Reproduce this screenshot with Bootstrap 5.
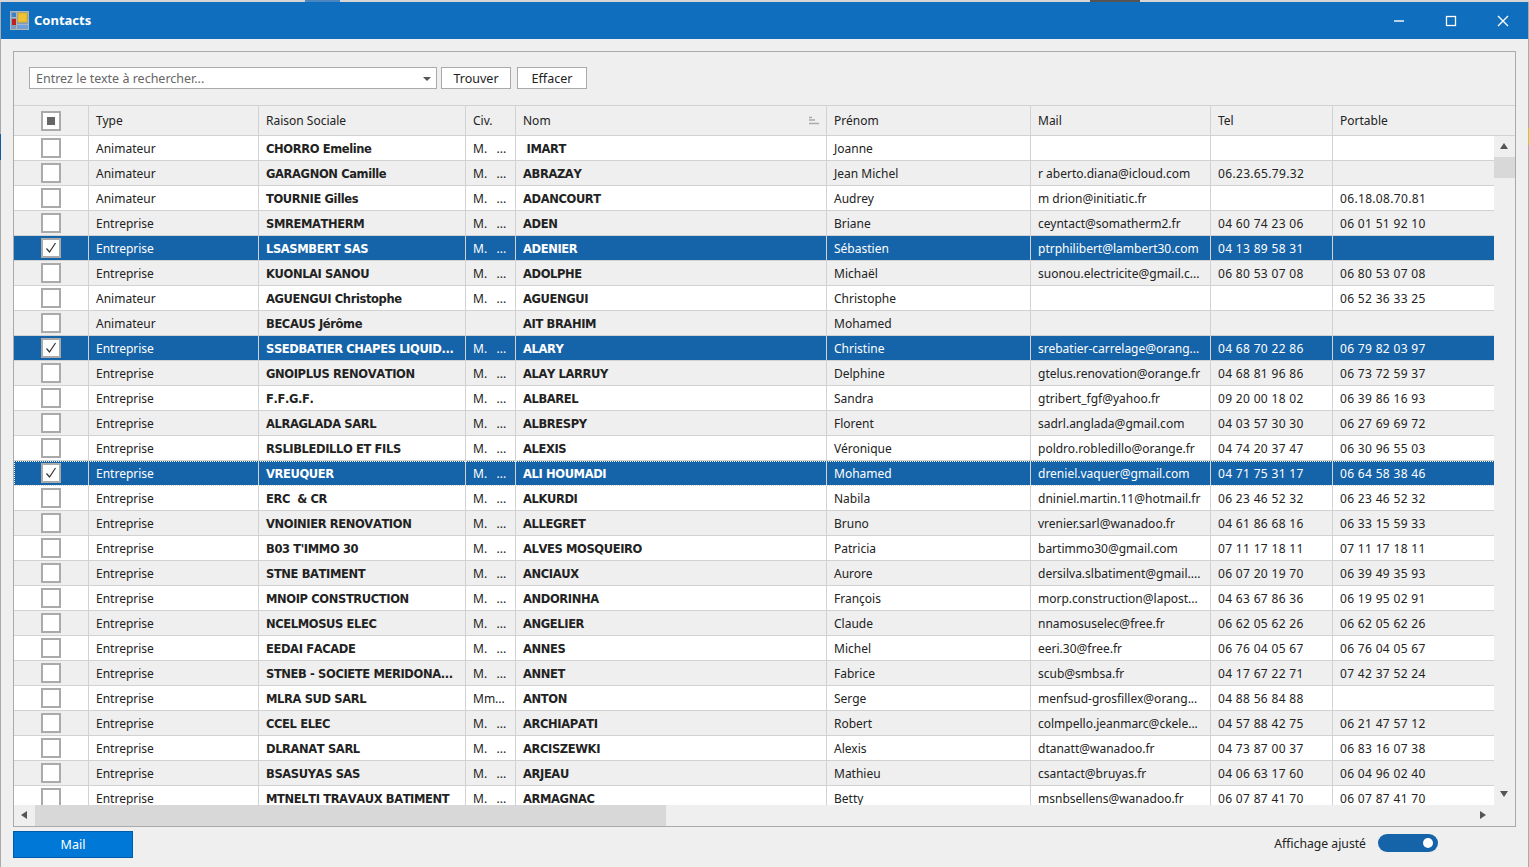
<!DOCTYPE html>
<html lang="fr">
  <head>
    <meta charset="UTF-8" />
    <meta name="viewport" content="width=device-width, initial-scale=1.0" />
    <title>Contacts</title>
    <link
      rel="stylesheet"
      href="https://cdn.jsdelivr.net/npm/bootstrap@5.3.3/dist/css/bootstrap.min.css"
    />
    <style>
      html, body { height: 100%; overflow: hidden; }
      body {
        font-family: "Noto Sans", sans-serif;
        font-size: 12px;
        color: #222;
        background: #efefef;
      }
      /* what shows of the application behind the window */
      .behind-strip {
        height: 2px;
        background: linear-gradient(90deg, #d6d6d6 305px, #4a86c0 305px, #4a86c0 340px, #d6d6d6 340px, #d6d6d6 1090px, #555 1090px, #555 1140px, #d6d6d6 1140px);
      }
      .behind-left { position: absolute; left: 0; top: 134px; width: 1px; height: 26px; background: #0f5c9e; }
      .behind-right { position: absolute; right: 0; top: 128px; width: 1px; height: 17px; background: #c8c820; }
      .win {
        height: 865px;
        background: #efefef;
        border-left: 1px solid #aaa;
        border-right: 1px solid #aaa;
      }
      .win-title { height: 37px; background: #106ebe; color: #fff; padding-left: 9px; }
      .win-title-text { font-weight: 700; font-size: 13px; margin-left: 5px; }
      .win-btns { margin-left: auto; margin-right: -1px; }
      .win-btn { width: 52px; height: 37px; }
      .group-box {
        margin: 12px 12px 0 12px;
        border: 1px solid #aaa;
        height: 776px;
      }
      .search-bar { height: 53px; padding: 15px 0 0 15px; }
      .search-combo {
        width: 408px; height: 22px;
        background: #fff; border: 1px solid #aaa;
        padding: 2px 6px 0; color: #666; font-size: 12.5px;
      }
      .caret-down {
        margin-left: auto; margin-right: -1px;
        border-left: 4px solid transparent; border-right: 4px solid transparent;
        border-top: 4px solid #555;
      }
      .flat-btn {
        width: 70px; height: 22px; padding: 1px 0 0;
        background: #fff; border: 1px solid #aaa; border-radius: 0;
        color: #222; font-size: 12.5px; line-height: 20px;
      }
      .flat-btn + .flat-btn { margin-left: 6px; }
      .grid-area { height: 721px; position: relative; overflow: hidden; }
      .grid-clip { height: 700px; overflow: hidden; }
      .contact-grid {
        table-layout: fixed; width: 1501px; margin: 0;
        --bs-table-bg: transparent; border-collapse: separate; border-spacing: 0;
      }
      .contact-grid th, .contact-grid td {
        padding: 0 7px;
        font-weight: 400; font-size: 12px;
        white-space: nowrap; overflow: hidden;
        vertical-align: middle;
        border: 0;
        border-right: 1px solid #d2d2d2;
        border-bottom: 1px solid #d2d2d2;
        color: #222;
      }
      .contact-grid th { height: 31px; background: #efefef; border-top: 1px solid #d2d2d2; line-height: 15px; padding-bottom: 1px; }
      .contact-grid th:last-child { border-right: 0; }
      .contact-grid td { height: 25px; line-height: 15px; padding-top: 1px; }
      .contact-grid tbody tr:nth-child(odd) td { background: #fff; }
      .contact-grid tbody tr:nth-child(even) td { background: #efefef; }
      .contact-grid tbody tr.sel td { background: #1563a8; color: #fff; }
      .contact-grid td.name-cell {
        font-family: "DejaVu Sans", sans-serif; font-weight: 700; font-size: 11.5px;
        letter-spacing: -.38px; font-kerning: none; padding-top: 3px;
      }
      .contact-grid td.phone-cell { letter-spacing: .33px; }
      .contact-grid td.cb-cell, .contact-grid th.cb-cell { padding: 0; text-align: center; }
      .contact-grid tr.focus-row { outline: 1px dotted #fff; outline-offset: -1px; }
      .tick-box {
        display: inline-flex; align-items: center; justify-content: center;
        width: 20px; height: 20px;
        background: #fff; border: 2px solid #aaa; vertical-align: middle;
      }
      .tick-mixed { width: 8px; height: 8px; background: #666; }
      .sort-mark { position: absolute; top: 11px; left: 795px; }
      .vscroll { position: absolute; top: 31px; right: 0; width: 21px; height: 669px; background: #efefef; }
      .vscroll-thumb { position: absolute; top: 21px; left: 0; width: 21px; height: 21px; background: #d8d8d8; }
      .arr { position: absolute; width: 0; height: 0; }
      .arr-up { left: 6px; top: 7px; border: 4.5px solid transparent; border-top: 0; border-bottom: 6px solid #555; }
      .arr-down { left: 6px; bottom: 8px; border: 4.5px solid transparent; border-bottom: 0; border-top: 6px solid #555; }
      .hscroll { height: 21px; background: #efefef; position: relative; }
      .hscroll-thumb { position: absolute; left: 21px; top: 0; width: 631px; height: 21px; background: #d8d8d8; }
      .arr-left { left: 7px; top: 6px; border: 4.5px solid transparent; border-left: 0; border-right: 6px solid #555; }
      .arr-right { left: 1466px; top: 6px; border: 4.5px solid transparent; border-right: 0; border-left: 6px solid #555; }
      .win-foot { padding: 4px 90px 0 12px; }
      .mail-btn {
        width: 120px; height: 27px; padding: 1px 0 0;
        background: #0078d7; border: 1px solid #005ca8; border-radius: 0;
        color: #fff; font-size: 12.5px;
      }
      .adjust-wrap { padding-top: 2px; }
      .adjust-label { font-size: 12.2px; margin-right: 12px; padding-top: 2px; }
      .adjust-toggle {
        width: 60px; height: 18px; border-radius: 9px; background: #1563a8;
        padding-right: 5px;
      }
      .adjust-knob { width: 10px; height: 10px; border-radius: 50%; background: #fff; }
    </style>
  </head>
  <body>
    <div class="behind-strip"></div>
    <div class="win d-flex flex-column">
      <div class="win-title d-flex align-items-center">
        <svg width="19" height="19" viewBox="0 0 19 19">
          <rect x="0.5" y="0.5" width="18" height="18" fill="#7f9cbc" stroke="#aab6c2" />
          <path d="M6.5 1v17M1 6.5h6M7 13.5h11" stroke="#aab6c2" fill="none" />
          <rect x="2" y="2" width="4" height="4" fill="#3f7fc4" />
          <rect x="8" y="2" width="9" height="9" fill="#f1c232" stroke="#d9ad2c" />
          <rect x="2" y="8" width="4" height="6" fill="#c0201c" />
          <rect x="9" y="14" width="7" height="3" fill="#6aa0e8" />
        </svg>
        <span class="win-title-text">Contacts</span>
        <div class="win-btns d-flex">
          <div class="win-btn d-flex align-items-center justify-content-center">
            <svg width="12" height="12" viewBox="0 0 12 12"><path d="M1 6h10" stroke="#fff" stroke-width="1.4" fill="none" /></svg>
          </div>
          <div class="win-btn d-flex align-items-center justify-content-center">
            <svg width="12" height="12" viewBox="0 0 12 12"><rect x="1.5" y="1.5" width="9" height="9" stroke="#fff" stroke-width="1.3" fill="none" /></svg>
          </div>
          <div class="win-btn d-flex align-items-center justify-content-center">
            <svg width="12" height="12" viewBox="0 0 12 12"><path d="M1 1l10 10M11 1L1 11" stroke="#fff" stroke-width="1.4" fill="none" /></svg>
          </div>
        </div>
      </div>

      <div class="group-box">
        <div class="search-bar d-flex align-items-start">
          <div class="search-combo d-flex align-items-center">
            <span>Entrez le texte à rechercher...</span>
            <span class="caret-down"></span>
          </div>
          <button class="btn flat-btn ms-1">Trouver</button>
          <button class="btn flat-btn">Effacer</button>
        </div>
        <div class="grid-area">
          <div class="grid-clip">
            <table class="table contact-grid">
              <colgroup>
                <col style="width: 75px" /><col style="width: 170px" /><col style="width: 207px" />
                <col style="width: 50px" /><col style="width: 311px" /><col style="width: 204px" />
                <col style="width: 180px" /><col style="width: 122px" /><col />
              </colgroup>
              <thead>
                <tr>
                  <th class="cb-cell"><span class="tick-box"><span class="tick-mixed"></span></span></th>
                  <th>Type</th><th>Raison Sociale</th><th>Civ.</th><th>Nom</th>
                  <th>Prénom</th><th>Mail</th><th>Tel</th><th>Portable</th>
                </tr>
              </thead>
              <tbody id="rows"></tbody>
            </table>
          </div>
          <svg class="sort-mark" width="10" height="9" viewBox="0 0 10 9">
            <path d="M0 1.5h3M0 4h6M0 7.5h10" stroke="#aaa" stroke-width="1.4" fill="none" />
          </svg>
          <div class="vscroll">
            <span class="arr arr-up"></span>
            <div class="vscroll-thumb"></div>
            <span class="arr arr-down"></span>
          </div>
          <div class="hscroll">
            <span class="arr arr-left"></span>
            <div class="hscroll-thumb"></div>
            <span class="arr arr-right"></span>
          </div>
        </div>
      </div>

      <div class="win-foot d-flex align-items-start">
        <button class="btn mail-btn">Mail</button>
        <div class="ms-auto d-flex align-items-center adjust-wrap">
          <span class="adjust-label">Affichage ajusté</span>
          <div class="adjust-toggle d-flex align-items-center justify-content-end">
            <span class="adjust-knob"></span>
          </div>
        </div>
      </div>
    </div>
    <span class="behind-left"></span>
    <span class="behind-right"></span>

    <script>
      // type, raison sociale, civ, nom, prenom, mail, tel, portable, etat
      var E = "Entreprise", A = "Animateur", M = "M.\u00a0\u00a0\u00a0...";
      var contacts = [
        [A, "CHORRO Emeline", M, "\u00a0IMART", "Joanne", "", "", ""],
        [A, "GARAGNON Camille", M, "ABRAZAY", "Jean Michel", "r aberto.diana@icloud.com", "06.23.65.79.32", ""],
        [A, "TOURNIE Gilles", M, "ADANCOURT", "Audrey", "m drion@initiatic.fr", "", "06.18.08.70.81"],
        [E, "SMREMATHERM", M, "ADEN", "Briane", "ceyntact@somatherm2.fr", "04 60 74 23 06", "06 01 51 92 10"],
        [E, "LSASMBERT SAS", M, "ADENIER", "Sébastien", "ptrphilibert@lambert30.com", "04 13 89 58 31", "", "sel"],
        [E, "KUONLAI SANOU", M, "ADOLPHE", "Michaël", "suonou.electricite@gmail.c...", "06 80 53 07 08", "06 80 53 07 08"],
        [A, "AGUENGUI Christophe", M, "AGUENGUI", "Christophe", "", "", "06 52 36 33 25"],
        [A, "BECAUS Jérôme", "", "AIT BRAHIM", "Mohamed", "", "", ""],
        [E, "SSEDBATIER CHAPES LIQUID...", M, "ALARY", "Christine", "srebatier-carrelage@orang...", "04 68 70 22 86", "06 79 82 03 97", "sel"],
        [E, "GNOIPLUS RENOVATION", M, "ALAY LARRUY", "Delphine", "gtelus.renovation@orange.fr", "04 68 81 96 86", "06 73 72 59 37"],
        [E, "F.F.G.F.", M, "ALBAREL", "Sandra", "gtribert_fgf@yahoo.fr", "09 20 00 18 02", "06 39 86 16 93"],
        [E, "ALRAGLADA SARL", M, "ALBRESPY", "Florent", "sadrl.anglada@gmail.com", "04 03 57 30 30", "06 27 69 69 72"],
        [E, "RSLIBLEDILLO ET FILS", M, "ALEXIS", "Véronique", "poldro.robledillo@orange.fr", "04 74 20 37 47", "06 30 96 55 03"],
        [E, "VREUQUER", M, "ALI HOUMADI", "Mohamed", "dreniel.vaquer@gmail.com", "04 71 75 31 17", "06 64 58 38 46", "sel focus-row"],
        [E, "ERC\u00a0 & CR", M, "ALKURDI", "Nabila", "dniniel.martin.11@hotmail.fr", "06 23 46 52 32", "06 23 46 52 32"],
        [E, "VNOINIER RENOVATION", M, "ALLEGRET", "Bruno", "vrenier.sarl@wanadoo.fr", "04 61 86 68 16", "06 33 15 59 33"],
        [E, "B03 T'IMMO 30", M, "ALVES MOSQUEIRO", "Patricia", "bartimmo30@gmail.com", "07 11 17 18 11", "07 11 17 18 11"],
        [E, "STNE BATIMENT", M, "ANCIAUX", "Aurore", "dersilva.slbatiment@gmail....", "06 07 20 19 70", "06 39 49 35 93"],
        [E, "MNOIP CONSTRUCTION", M, "ANDORINHA", "François", "morp.construction@lapost...", "04 63 67 86 36", "06 19 95 02 91"],
        [E, "NCELMOSUS ELEC", M, "ANGELIER", "Claude", "nnamosuselec@free.fr", "06 62 05 62 26", "06 62 05 62 26"],
        [E, "EEDAI FACADE", M, "ANNES", "Michel", "eeri.30@free.fr", "06 76 04 05 67", "06 76 04 05 67"],
        [E, "STNEB - SOCIETE MERIDONA...", M, "ANNET", "Fabrice", "scub@smbsa.fr", "04 17 67 22 71", "07 42 37 52 24"],
        [E, "MLRA SUD SARL", "Mm...", "ANTON", "Serge", "menfsud-grosfillex@orang...", "04 88 56 84 88", ""],
        [E, "CCEL ELEC", M, "ARCHIAPATI", "Robert", "colmpello.jeanmarc@ckele...", "04 57 88 42 75", "06 21 47 57 12"],
        [E, "DLRANAT SARL", M, "ARCISZEWKI", "Alexis", "dtanatt@wanadoo.fr", "04 73 87 00 37", "06 83 16 07 38"],
        [E, "BSASUYAS SAS", M, "ARJEAU", "Mathieu", "csantact@bruyas.fr", "04 06 63 17 60", "06 04 96 02 40"],
        [E, "MTNELTI TRAVAUX BATIMENT", M, "ARMAGNAC", "Betty", "msnbsellens@wanadoo.fr", "06 07 87 41 70", "06 07 87 41 70"],
      ];
      var tick = '<svg width="12" height="12" viewBox="0 0 12 12"><path d="M1.5 6.5l3 3.5 6-9" stroke="#333" stroke-width="1.2" fill="none" /></svg>';
      document.getElementById("rows").innerHTML = contacts
        .map(function (c) {
          var on = c[8] ? true : false;
          return (
            '<tr class="' + (c[8] || "") + '">' +
            '<td class="cb-cell"><span class="tick-box">' + (on ? tick : "") + "</span></td>" +
            "<td>" + c[0] + '</td><td class="name-cell">' + c[1] + "</td><td>" + c[2] + '</td><td class="name-cell">' + c[3] + "</td>" +
            "<td>" + c[4] + "</td><td>" + c[5] + '</td><td class="phone-cell">' + c[6] + '</td><td class="phone-cell">' + c[7] + "</td></tr>"
          );
        })
        .join("");
    </script>
    <script src="https://cdn.jsdelivr.net/npm/bootstrap@5.3.3/dist/js/bootstrap.bundle.min.js"></script>
  </body>
</html>
